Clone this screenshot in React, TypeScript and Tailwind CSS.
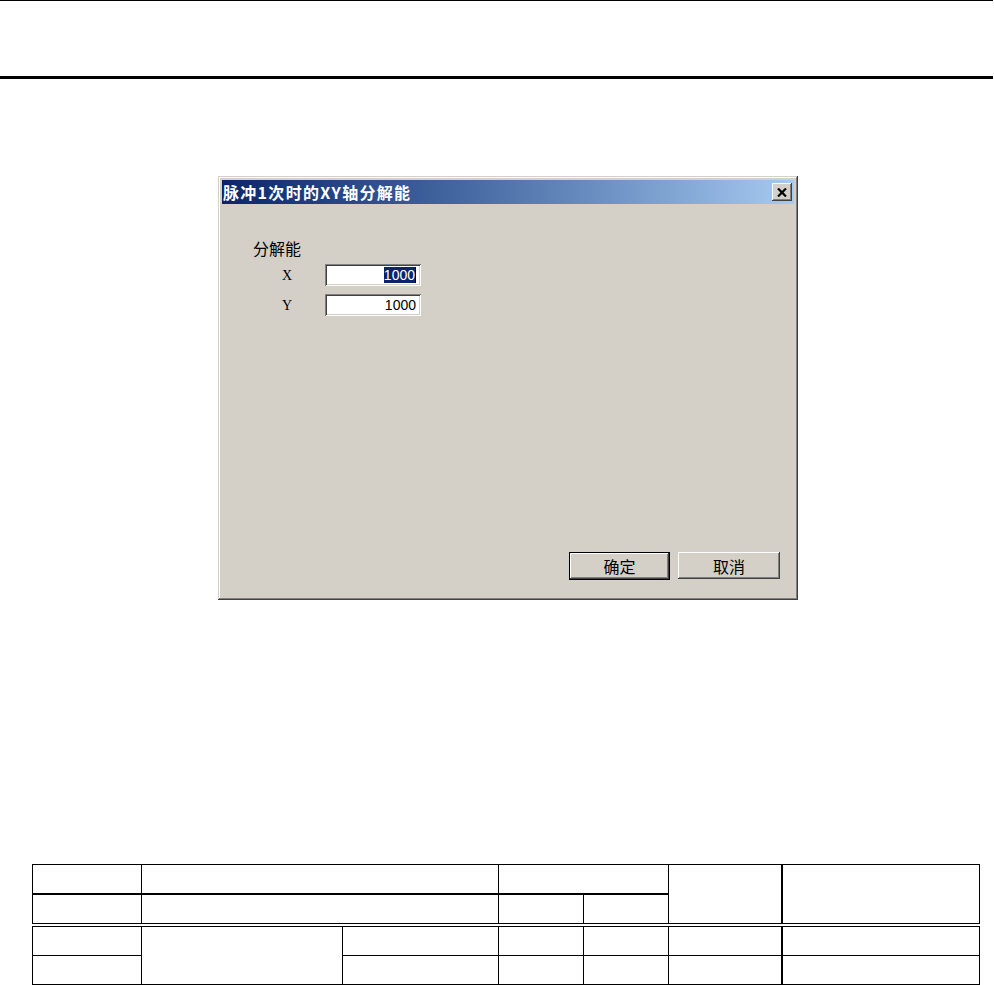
const cjk = "font-[family-name:'Noto_Sans_CJK_SC',sans-serif]";

function CloseIcon() {
  return (
    <svg width="10" height="9" viewBox="0 0 10 9">
      <path d="M1 0.5 L9 8.5 M9 0.5 L1 8.5" stroke="#000" strokeWidth="2.2" fill="none" />
    </svg>
  );
}

function Field({ label, value, selected }: { label: string; value: string; selected?: boolean }) {
  return (
    <div className="flex items-center h-[22px]">
      <span className="w-[72px] pl-[29px] text-[14px] text-black font-[family-name:'Liberation_Serif',serif]">{label}</span>
      <div className="w-[96px] h-[22px] bg-white flex items-center justify-end pr-[5px] text-[14px] text-black font-[family-name:'Liberation_Sans',sans-serif] shadow-[inset_1px_1px_#808080,inset_-1px_-1px_#ffffff,inset_2px_2px_#404040,inset_-2px_-2px_#d4d0c8]">
        {selected ? (
          <span className="bg-[#0a246a] text-white leading-[16px] border-r border-black">{value}</span>
        ) : (
          <span className="leading-[16px]">{value}</span>
        )}
      </div>
    </div>
  );
}

function Dialog() {
  return (
    <div className="ml-[218px] mt-[97px] w-[580px] h-[424px] bg-[#d4d0c8] p-[4px] flex flex-col shadow-[inset_-1px_-1px_#404040,inset_1px_1px_#d4d0c8,inset_-2px_-2px_#808080,inset_2px_2px_#ffffff]">
      <div className="h-[24px] flex items-center justify-between pl-[1px] pr-[2px] bg-linear-to-r from-[#0a246a] to-[#a6caf0]">
        <span className={`text-white font-bold text-[16px] leading-none tracking-[1.3px] ${cjk}`}>
          脉冲1次时的XY轴分解能
        </span>
        <div className="w-[20px] h-[18px] bg-[#d4d0c8] flex items-center justify-center shadow-[inset_-1px_-1px_#404040,inset_1px_1px_#ffffff,inset_-2px_-2px_#808080,inset_2px_2px_#d4d0c8]">
          <CloseIcon />
        </div>
      </div>
      <div className="flex-1 flex flex-col pl-[31px] pt-[34px] pr-[14px] pb-[16px]">
        <div className={`text-[16px] leading-[20px] text-black ${cjk}`}>分解能</div>
        <div className="mt-[6px]">
          <Field label="X" value="1000" selected />
        </div>
        <div className="mt-[8px]">
          <Field label="Y" value="1000" />
        </div>
        <div className="flex-1" />
        <div className="flex justify-end gap-[8px]">
          <div className={`w-[101px] h-[28px] flex items-center justify-center text-[16px] text-black ${cjk} shadow-[inset_0_0_0_1px_#000000,inset_-2px_-2px_#404040,inset_2px_2px_#ffffff,inset_-3px_-3px_#808080]`}>
            确定
          </div>
          <div className={`w-[102px] h-[27px] flex items-center justify-center text-[16px] text-black ${cjk} shadow-[inset_-1px_-1px_#404040,inset_1px_1px_#ffffff,inset_-2px_-2px_#808080,inset_2px_2px_#d4d0c8]`}>
            取消
          </div>
        </div>
      </div>
    </div>
  );
}

function Cols() {
  return (
    <colgroup>
      <col className="w-[109px]" />
      <col className="w-[201px]" />
      <col className="w-[156px]" />
      <col className="w-[85px]" />
      <col className="w-[85px]" />
      <col className="w-[113px]" />
      <col className="w-[198px]" />
    </colgroup>
  );
}

function Sheet() {
  const td = "border border-black p-0";
  return (
    <div className="ml-[32px] mt-[264px] w-[947px] flex flex-col gap-[2px]">
      <table className="table-fixed border-collapse w-[947px]">
        <Cols />
        <tbody>
          <tr className="h-[29px]">
            <td className={td} />
            <td className={td} colSpan={2} />
            <td className={td} colSpan={2} />
            <td className={td} rowSpan={2} />
            <td className={`${td} border-l-2`} rowSpan={2} />
          </tr>
          <tr className="h-[30px]">
            <td className={`${td} border-t-2`} />
            <td className={`${td} border-t-2`} colSpan={2} />
            <td className={`${td} border-t-2`} />
            <td className={`${td} border-t-2`} />
          </tr>
        </tbody>
      </table>
      <table className="table-fixed border-collapse w-[947px]">
        <Cols />
        <tbody>
          <tr className="h-[29px]">
            <td className={td} />
            <td className={td} rowSpan={2} />
            <td className={td} />
            <td className={td} />
            <td className={td} />
            <td className={td} />
            <td className={`${td} border-l-2`} />
          </tr>
          <tr className="h-[29px]">
            <td className={td} />
            <td className={td} />
            <td className={td} />
            <td className={td} />
            <td className={td} />
            <td className={`${td} border-l-2`} />
          </tr>
        </tbody>
      </table>
    </div>
  );
}

export default function App() {
  return (
    <div className="w-[994px] h-[985px] bg-white overflow-hidden flex flex-col">
      <div className="w-[993px] h-px bg-black" />
      <div className="w-[993px] h-[3px] mt-[75px] bg-black" />
      <Dialog />
      <Sheet />
    </div>
  );
}
